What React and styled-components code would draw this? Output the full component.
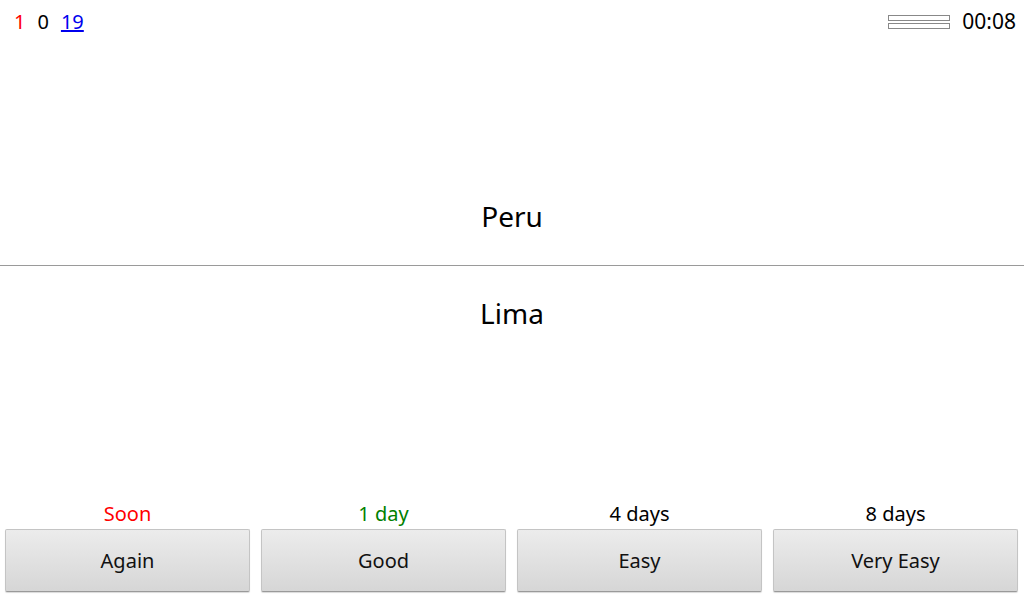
import styled, { createGlobalStyle } from "styled-components";

const GlobalStyle = createGlobalStyle`
    html, body {
        margin: 0;
        padding: 0;
        background: #ffffff;
        font-family: "Noto Sans", "Open Sans", "DejaVu Sans", sans-serif;
    }
`;

const answers = [
    { label: "Again", interval: "Soon", color: "#ff0000" },
    { label: "Good", interval: "1 day", color: "#008000" },
    { label: "Easy", interval: "4 days", color: "#000000" },
    { label: "Very Easy", interval: "8 days", color: "#000000" },
];

const App = () => {
    return (
        <>
            <GlobalStyle />
            <Screen>
                <TopBar>
                    <Counts>
                        <Count color="#ff0000">1</Count>
                        <Count color="#000000">0</Count>
                        <DueLink href="#">19</DueLink>
                    </Counts>
                    <Status>
                        <Progress>
                            <ProgressBar />
                            <ProgressBar />
                        </Progress>
                        <Timer>00:08</Timer>
                    </Status>
                </TopBar>
                <Card>
                    <Question>Peru</Question>
                    <Divider />
                    <Answer>Lima</Answer>
                </Card>
                <Buttons>
                    {answers.map((a) => (
                        <ButtonColumn key={a.label}>
                            <Interval color={a.color}>{a.interval}</Interval>
                            <EaseButton>{a.label}</EaseButton>
                        </ButtonColumn>
                    ))}
                </Buttons>
            </Screen>
        </>
    );
};

const Screen = styled.div`
    width: 1024px;
    height: 600px;
    display: flex;
    flex-direction: column;
    overflow: hidden;
`;
const TopBar = styled.div`
    height: 42px;
    display: flex;
    justify-content: space-between;
    align-items: center;
    padding: 0 8px 0 14px;
    font-size: 20px;
`;
const Counts = styled.div`
    display: flex;
    gap: 12px;
    align-items: center;
`;
const Count = styled.span`
    color: ${(p) => p.color};
`;
const DueLink = styled.a`
    color: #0000ee;
    text-decoration: underline;
`;
const Status = styled.div`
    display: flex;
    align-items: center;
    gap: 12px;
`;
const Progress = styled.div`
    display: flex;
    flex-direction: column;
    gap: 2px;
    margin-top: 1px;
`;
const ProgressBar = styled.div`
    width: 60px;
    height: 4px;
    border: 1px solid #888888;
`;
const Timer = styled.span`
    color: #000000;
    font-size: 21px;
`;
const Card = styled.div`
    flex: 1;
    display: flex;
    flex-direction: column;
    align-items: center;
    padding-top: 155px;
`;
const Question = styled.div`
    font-size: 28px;
    line-height: 38px;
    color: #000;
`;
const Divider = styled.div`
    align-self: stretch;
    height: 1px;
    background: #9a9a9a;
    margin: 30px 0 28px;
`;
const Answer = styled.div`
    font-size: 28px;
    line-height: 38px;
    color: #000;
`;
const Buttons = styled.div`
    display: flex;
    gap: 11px;
    padding: 0 6px 8px 5px;
`;
const ButtonColumn = styled.div`
    flex: 1;
    display: flex;
    flex-direction: column;
    align-items: stretch;
`;
const Interval = styled.div`
    text-align: center;
    font-size: 20px;
    line-height: 28px;
    color: ${(p) => p.color};
    margin-bottom: 1px;
`;
const EaseButton = styled.button`
    height: 63px;
    border: 1px solid #c4c4c4;
    border-bottom-color: #9a9a9a;
    border-radius: 2px;
    background: linear-gradient(#ececec, #d6d6d6);
    box-shadow: 0 1px 1px rgba(0, 0, 0, 0.15);
    font-family: inherit;
    font-size: 20px;
    color: #111;
    padding: 0;
`;

export default App;
